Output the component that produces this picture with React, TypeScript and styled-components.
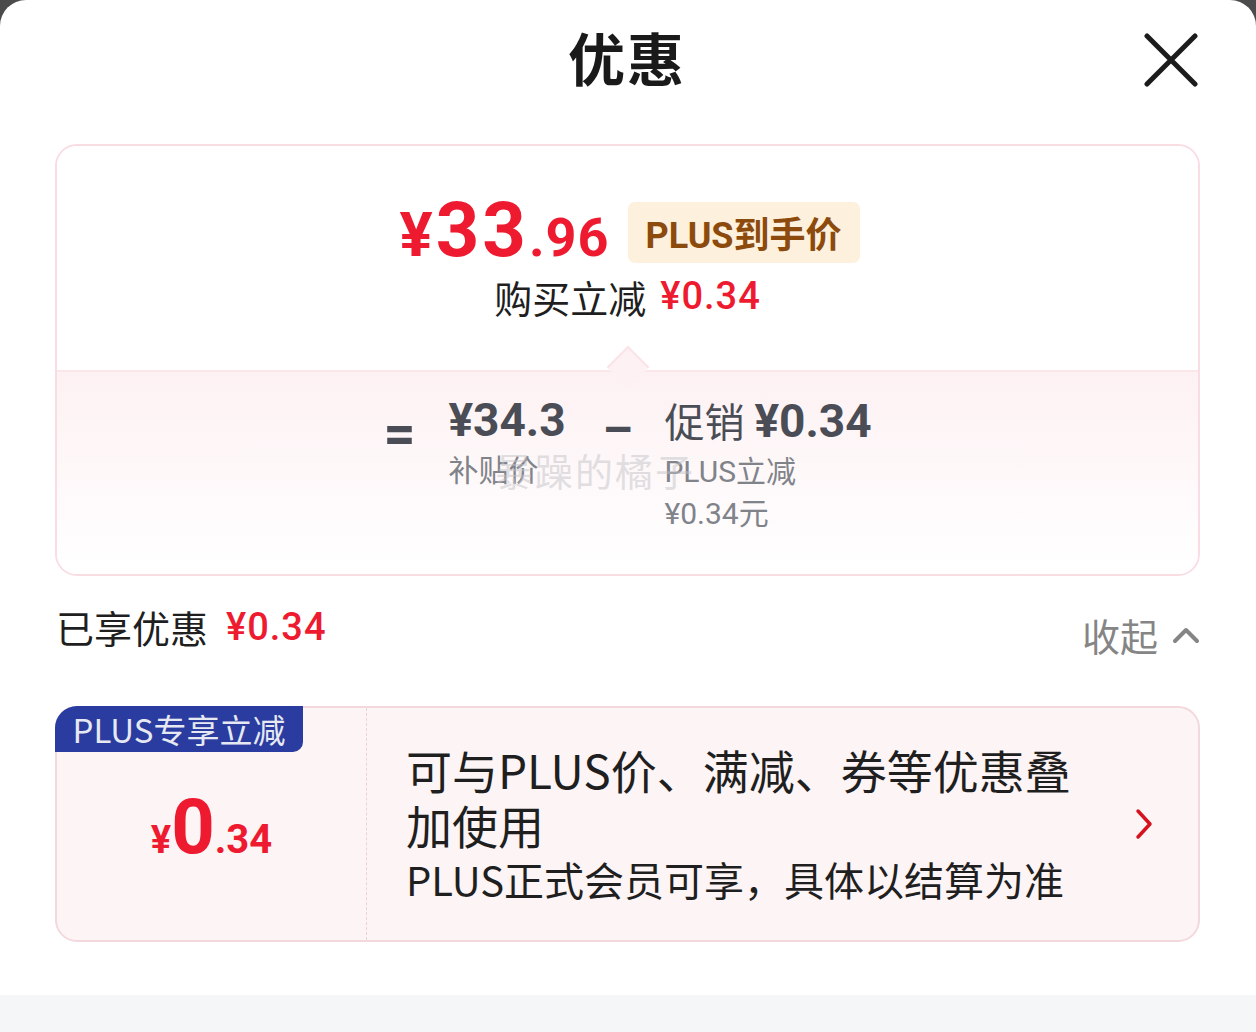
import React from "react";
import styled, { createGlobalStyle } from "styled-components";

const Global = createGlobalStyle`
  html, body { margin: 0; padding: 0; background: #4b4b4b; }
  body { font-family: "Noto Sans CJK SC", "Noto Sans", sans-serif; }
  * { box-sizing: border-box; }
`;

const CJK = `"Noto Sans CJK SC", "Noto Sans", sans-serif`;
const NUM = `Roboto, "Noto Sans CJK SC", sans-serif`;
const RED = "#ee1a2f";

const Sheet = styled.div`
  width: 1256px;
  height: 1032px;
  background: #fff;
  border-radius: 26px 26px 0 0;
  display: flex;
  flex-direction: column;
  overflow: hidden;
`;

const Header = styled.div`
  height: 118px;
  flex: none;
  display: grid;
  grid-template-columns: 1fr auto 1fr;
  align-items: center;
  padding: 0 58px 0 56px;
`;

const Title = styled.h1`
  grid-column: 2;
  margin: 0 0 6px;
  font-family: ${CJK};
  font-weight: 700;
  font-size: 57px;
  color: #1a1a1a;
  line-height: 1;
  letter-spacing: 2px;
`;

const CloseBtn = styled.button`
  justify-self: end;
  width: 54px;
  height: 54px;
  border: 0;
  background: none;
  padding: 0;
  display: flex;
  align-items: center;
  justify-content: center;
  margin-top: 2px;
`;

const Body = styled.div`
  flex: 1;
  padding: 26px 56px 0 55px;
  display: flex;
  flex-direction: column;
`;

const PriceCard = styled.div`
  position: relative;
  border: 2px solid #fadde3;
  border-radius: 22px;
  overflow: hidden;
  height: 432px;
  display: flex;
  flex-direction: column;
`;

const TopPart = styled.div`
  height: 224px;
  flex: none;
  display: flex;
  flex-direction: column;
  align-items: center;
  padding-top: 46px;
  background: #fff;
`;

const PriceRow = styled.div`
  display: flex;
  align-items: center;
  gap: 18px;
  margin-left: 4px;
`;

const BigPrice = styled.div`
  font-family: ${NUM};
  font-weight: 700;
  color: ${RED};
  display: flex;
  align-items: baseline;
  line-height: 1;
`;

const PriceUnit = styled.span<{ $size: number; $space?: number; $track?: number }>`
  font-size: ${(p) => p.$size}px;
  margin-right: ${(p) => p.$space ?? 0}px;
  letter-spacing: ${(p) => p.$track ?? 0}px;
`;

const PlusBadge = styled.div`
  height: 61px;
  padding: 0 18px;
  border-radius: 7px;
  background: #fdf0dd;
  color: #8c4a0c;
  font-family: ${NUM};
  font-weight: 700;
  font-size: 36px;
  display: flex;
  align-items: center;
  margin-top: 4px;
`;

const ReduceLine = styled.div`
  margin-top: 6px;
  font-size: 38px;
  color: #1f1f1f;
  display: flex;
  align-items: center;
  gap: 14px;
  line-height: 1.2;
`;

const RedNum = styled.span<{ $size?: number; $weight?: number }>`
  font-family: ${NUM};
  color: ${RED};
  font-size: ${(p) => p.$size ?? 36}px;
  font-weight: ${(p) => p.$weight ?? 500};
  letter-spacing: 1px;
`;

const BottomPart = styled.div`
  flex: 1;
  border-top: 2px solid #fbe6ea;
  background: linear-gradient(180deg, #fdf1f3 0%, #fff 100%);
  display: flex;
  justify-content: center;
  padding-top: 22px;
`;

const Notch = styled.div`
  position: absolute;
  left: 556px;
  top: 206px;
  width: 30px;
  height: 30px;
  background: #fdf1f3;
  border-top: 2px solid #fbe3e8;
  border-left: 2px solid #fbe3e8;
  transform: rotate(45deg);
`;

const Op = styled.div<{ $w: number; $size: number }>`
  width: ${(p) => p.$w}px;
  font-family: ${NUM};
  font-weight: 700;
  font-size: ${(p) => p.$size}px;
  color: #4a4d55;
  line-height: 1;
  padding-top: 12px;
`;

const Col = styled.div<{ $w?: number }>`
  width: ${(p) => (p.$w ? `${p.$w}px` : "auto")};
  display: flex;
  flex-direction: column;
`;

const ColMain = styled.div`
  font-family: ${NUM};
  font-weight: 700;
  font-size: 46px;
  color: #4a4d55;
  line-height: 52px;
  display: flex;
  align-items: baseline;
  gap: 10px;
`;

const ColMainCJK = styled.span`
  font-family: ${CJK};
  font-weight: 400;
  font-size: 40px;
`;

const ColSub = styled.div`
  font-family: ${NUM};
  font-size: 30px;
  color: #80838a;
  line-height: 42px;
  width: 160px;
  margin-top: 4px;
`;

const Watermark = styled.div`
  position: absolute;
  left: 438px;
  top: 296px;
  font-size: 38px;
  color: rgba(195, 195, 200, 0.5);
  letter-spacing: 2px;
  pointer-events: none;
`;

const EnjoyRow = styled.div`
  display: flex;
  justify-content: space-between;
  align-items: flex-end;
  height: 84px;
  padding-left: 1px;
`;

const EnjoyLeft = styled.div`
  display: flex;
  align-items: center;
  gap: 18px;
  font-size: 38px;
  color: #1f1f1f;
  margin-bottom: 6px;
`;

const Collapse = styled.div`
  display: flex;
  align-items: center;
  gap: 14px;
  font-size: 38px;
  color: #858585;
  margin-bottom: -2px;
`;

const Coupon = styled.div`
  position: relative;
  margin-top: 46px;
  height: 236px;
  border: 2px solid #f3d8dd;
  border-radius: 22px;
  background: #fdf4f5;
  display: flex;
`;

const CouponBadge = styled.div`
  position: absolute;
  left: -2px;
  top: -2px;
  width: 248px;
  height: 46px;
  background: #2a3c9f;
  color: #e6e8f2;
  font-size: 33px;
  border-radius: 22px 0 10px 0;
  display: flex;
  align-items: center;
  justify-content: center;
  line-height: 1;
`;

const CouponLeft = styled.div`
  width: 310px;
  flex: none;
  border-right: 1.5px dashed #ead3d7;
  display: flex;
  align-items: center;
  justify-content: center;
  padding-top: 6px;
`;

const CouponRight = styled.div`
  flex: 1;
  display: flex;
  align-items: center;
  padding: 0 44px 0 39px;
  gap: 20px;
`;

const CouponText = styled.div`
  flex: 1;
  display: flex;
  flex-direction: column;
`;

const CouponTitle = styled.div`
  font-size: 46px;
  line-height: 55px;
  color: #1f1f1f;
  width: 690px;
`;

const CouponSub = styled.div`
  font-size: 40px;
  line-height: 55px;
  color: #1f1f1f;
`;

const FooterBar = styled.div`
  height: 37px;
  flex: none;
  background: #f5f6f8;
`;

export default function App() {
  return (
    <>
      <Global />
      <Sheet>
        <Header>
          <Title>优惠</Title>
          <CloseBtn aria-label="关闭">
            <svg width="54" height="54" viewBox="0 0 54 54">
              <path d="M3 3 L51 51 M51 3 L3 51" stroke="#1c1c1c" strokeWidth="5" strokeLinecap="round" />
            </svg>
          </CloseBtn>
        </Header>
        <Body>
          <PriceCard>
            <TopPart>
              <PriceRow>
                <BigPrice>
                  <PriceUnit $size={62} $space={3}>¥</PriceUnit>
                  <PriceUnit $size={76} $track={3}>33</PriceUnit>
                  <PriceUnit $size={54} $track={1}>.96</PriceUnit>
                </BigPrice>
                <PlusBadge>PLUS到手价</PlusBadge>
              </PriceRow>
              <ReduceLine>
                <span>购买立减</span>
                <RedNum $size={38}>¥0.34</RedNum>
              </ReduceLine>
            </TopPart>
            <BottomPart>
              <Op $w={65} $size={56}>=</Op>
              <Col $w={154}>
                <ColMain>¥34.3</ColMain>
                <ColSub>补贴价</ColSub>
              </Col>
              <Op $w={62} $size={48}>–</Op>
              <Col>
                <ColMain>
                  <ColMainCJK>促销</ColMainCJK>¥0.34
                </ColMain>
                <ColSub>PLUS立减 ¥0.34元</ColSub>
              </Col>
            </BottomPart>
            <Notch />
            <Watermark>暴躁的橘子</Watermark>
          </PriceCard>
          <EnjoyRow>
            <EnjoyLeft>
              <span>已享优惠</span>
              <RedNum $size={38} $weight={500}>¥0.34</RedNum>
            </EnjoyLeft>
            <Collapse>
              <span>收起</span>
              <svg width="28" height="18" viewBox="0 0 28 18">
                <path d="M3 15 L14 4 L25 15" stroke="#858585" strokeWidth="4" fill="none" strokeLinecap="round" strokeLinejoin="round" />
              </svg>
            </Collapse>
          </EnjoyRow>
          <Coupon>
            <CouponBadge>PLUS专享立减</CouponBadge>
            <CouponLeft>
              <BigPrice>
                <PriceUnit $size={38}>¥</PriceUnit>
                <PriceUnit $size={76}>0</PriceUnit>
                <PriceUnit $size={40}>.34</PriceUnit>
              </BigPrice>
            </CouponLeft>
            <CouponRight>
              <CouponText>
                <CouponTitle>可与PLUS价、满减、券等优惠叠加使用</CouponTitle>
                <CouponSub>PLUS正式会员可享，具体以结算为准</CouponSub>
              </CouponText>
              <svg width="20" height="32" viewBox="0 0 20 32">
                <path d="M4 3 L16 16 L4 29" stroke="#d4131f" strokeWidth="3.5" fill="none" strokeLinecap="round" strokeLinejoin="round" />
              </svg>
            </CouponRight>
          </Coupon>
        </Body>
        <FooterBar />
      </Sheet>
    </>
  );
}
